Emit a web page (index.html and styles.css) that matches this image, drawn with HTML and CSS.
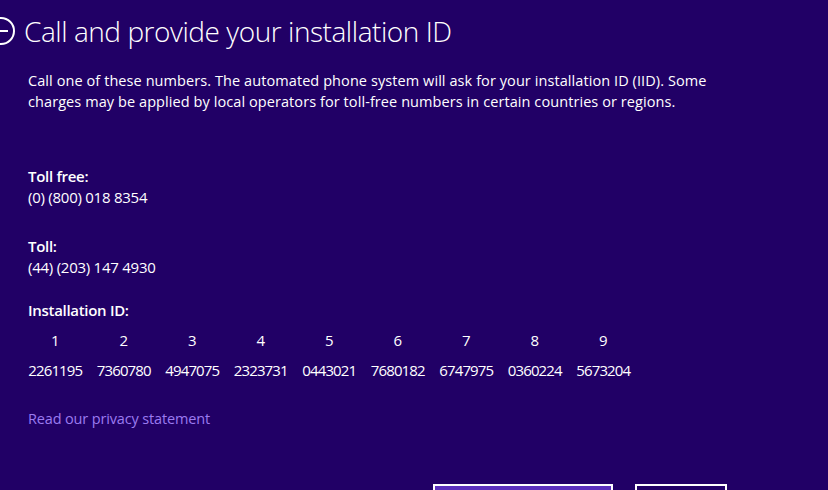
FILE: index.html
```html
<!DOCTYPE html>
<html>
<head>
<meta charset="utf-8">
<link rel="stylesheet" href="styles.css">
</head>
<body>
<div class="page">
  <header class="header">
    <svg class="back" width="30" height="30" viewBox="0 0 30 30">
      <circle cx="15" cy="15" r="13" fill="none" stroke="#fff" stroke-width="2"/>
      <path d="M8 15 H22 M13 10 L8 15 L13 20" fill="none" stroke="#fff" stroke-width="2"/>
    </svg>
    <h1 class="title">Call and provide your installation ID</h1>
  </header>
  <p class="intro">Call one of these numbers. The automated phone system will ask for your installation ID (IID). Some charges may be applied by local operators for toll-free numbers in certain countries or regions.</p>

  <div class="block block-free">
    <div class="label">Toll free:</div>
    <div class="value">(0) (800) 018 8354</div>
  </div>
  <div class="block block-toll">
    <div class="label">Toll:</div>
    <div class="value">(44) (203) 147 4930</div>
  </div>
  <div class="block block-id">
    <div class="label">Installation ID:</div>
    <div class="idgrid">
      <span class="col">1</span><span class="col">2</span><span class="col">3</span><span class="col">4</span><span class="col">5</span><span class="col">6</span><span class="col">7</span><span class="col">8</span><span class="col">9</span>
      <span class="grp">2261195</span><span class="grp">7360780</span><span class="grp">4947075</span><span class="grp">2323731</span><span class="grp">0443021</span><span class="grp">7680182</span><span class="grp">6747975</span><span class="grp">0360224</span><span class="grp">5673204</span>
    </div>
  </div>
  <a class="privacy" href="#">Read our privacy statement</a>
  <div class="buttons">
    <button class="btn btn-primary" aria-label="Enter confirmation ID"></button>
    <button class="btn" aria-label="Cancel"></button>
  </div>
</div>
</body>
</html>
```
FILE: styles.css
```css
html, body {
  margin: 0;
  padding: 0;
  background: #210066;
  overflow: hidden;
}
body {
  width: 828px;
  height: 490px;
  color: #ffffff;
  font-family: "Open Sans", "Noto Sans", sans-serif;
}
.page {
  display: flex;
  flex-direction: column;
}
.header {
  display: flex;
  align-items: center;
  height: 40px;
  margin-top: 11px;
}
.back {
  margin-left: -14px;
  margin-right: 8px;
  flex: none;
}
.title {
  margin: 0;
  font-size: 28px;
  font-weight: 300;
  line-height: 40px;
  letter-spacing: -0.45px;
}
.intro {
  margin: 19px 0 0 28px;
  width: 720px;
  font-size: 14.5px;
  line-height: 21px;
  letter-spacing: 0.08px;
}
.block {
  margin-left: 28px;
  font-size: 15px;
  line-height: 21px;
  letter-spacing: -0.25px;
}
.block-free { margin-top: 54px; }
.block-toll { margin-top: 28px; }
.block-id { margin-top: 22px; }
.label {
  font-weight: 600;
  letter-spacing: -0.3px;
}
.idgrid {
  display: grid;
  grid-template-columns: repeat(9, 68.5px);
  margin-left: -7px;
  row-gap: 9px;
  margin-top: 9px;
}
.col, .grp {
  text-align: center;
}
.grp {
  letter-spacing: -0.85px;
}
.privacy {
  margin: 27px 0 0 28px;
  color: #9b7bf0;
  font-size: 14.5px;
  line-height: 21px;
  text-decoration: none;
  letter-spacing: -0.15px;
  align-self: flex-start;
}
.buttons {
  display: flex;
  justify-content: flex-end;
  gap: 22px;
  padding-right: 101px;
  margin-top: 55px;
}
.btn {
  height: 34px;
  width: 92px;
  border: 2px solid #ffffff;
  background: #210066;
  padding: 0;
  flex: none;
}
.btn-primary {
  width: 180px;
  background: #5b2fbd;
}
```
